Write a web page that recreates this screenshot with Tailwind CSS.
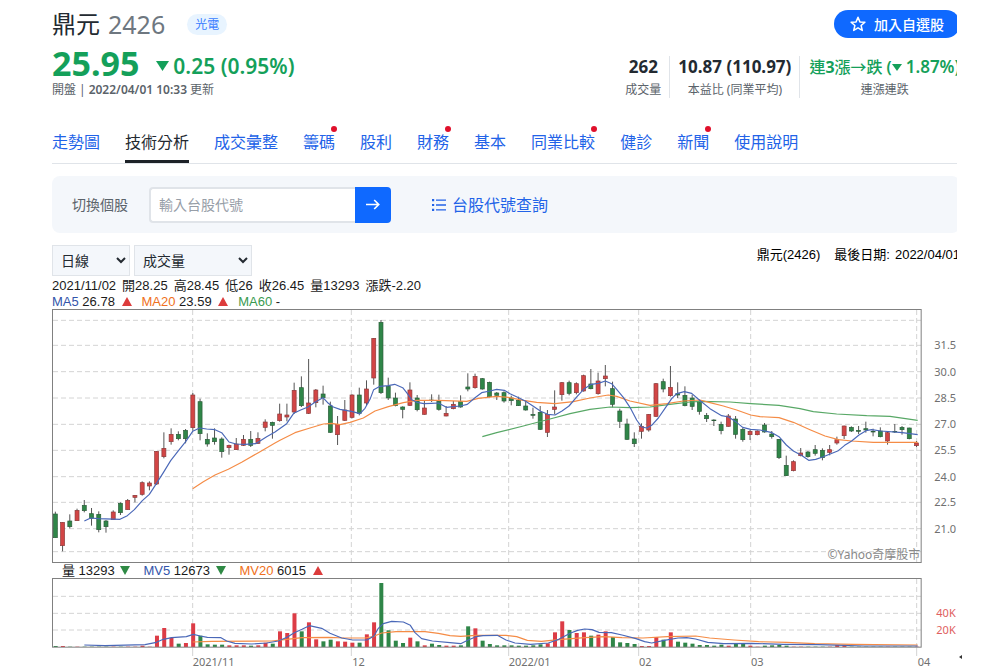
<!DOCTYPE html>
<html lang="zh-Hant">
<head>
<meta charset="utf-8">
<meta name="viewport" content="width=device-width, initial-scale=1">
<title>鼎元 2426 技術分析</title>
<script src="https://cdn.jsdelivr.net/npm/@tailwindcss/browser@4"></script>
</head>
<body class="bg-white font-['Noto_Sans','Noto_Sans_CJK_TC',sans-serif] text-[#232a31]">
<div class="relative">
<main class="ml-[52px] mr-[43px] overflow-hidden">
<div class="w-[calc(100%+3px)]">

  <header class="flex justify-between">
    <div class="pt-[6px]">
      <div class="flex h-9 items-center">
        <h1 class="text-[24px] leading-9">鼎元</h1>
        <span class="ml-2 text-[25px] leading-9 text-[#6e7780]">2426</span>
        <a href="#" class="ml-[22px] rounded-full bg-[#e8f4ff] px-2 text-[12px] leading-[21px] text-[#3a7dff]">光電</a>
      </div>
      <div class="mt-[3px] flex h-9 items-center text-[#14a05a]">
        <span class="text-[34px] font-bold leading-9">25.95</span>
        <svg class="ml-[17px] mt-[6px] h-[10px] w-[13px]" viewBox="0 0 13 10" fill="currentColor"><path d="M0 0h13L6.500 10z"/></svg>
        <span class="ml-1 mt-[6px] text-[21px] font-semibold leading-7">0.25 (0.95%)</span>
      </div>
      <p class="mt-px flex gap-[3px] text-[12px] leading-4 text-[#5b636a]"><span>開盤</span><span>|</span><span class="font-semibold">2022/04/01 10:33</span><span>更新</span></p>
    </div>
    <div class="flex flex-col items-end pt-[10px]">
      <button class="flex h-7 w-[126px] items-center justify-center gap-2 rounded-full bg-[#0f69ff] text-[14px] font-medium text-white">
        <svg class="size-4" viewBox="0 0 16 16" fill="none" stroke="currentColor" stroke-width="1.500" stroke-linejoin="round"><path d="M8 1.300l1.900 4.600 5 .4-3.800 3.200 1.200 4.900L8 11.800l-4.300 2.600 1.200-4.900L1.100 6.300l5-.4z"/></svg>
        加入自選股
      </button>
      <dl class="mt-[18px] flex h-[42px] text-center text-[17px] font-bold">
        <div class="flex flex-col-reverse justify-between border-r border-[#e0e4e9] pr-2">
          <dt class="text-[12px] font-normal leading-4 text-[#5b636a]">成交量</dt><dd class="leading-[22px]">262</dd>
        </div>
        <div class="flex flex-col-reverse justify-between border-r border-[#e0e4e9] px-2">
          <dt class="text-[12px] font-normal leading-4 text-[#5b636a]">本益比 (同業平均)</dt><dd class="leading-[22px]">10.87 (110.97)</dd>
        </div>
        <div class="flex flex-col-reverse justify-between pl-[9px]">
          <dt class="text-[12px] font-normal leading-4 text-[#5b636a]">連漲連跌</dt>
          <dd class="flex items-center whitespace-nowrap text-[16px] leading-[22px] text-[#14a05a]"><span class="font-medium">連<b>3</b>漲→跌</span><span class="ml-1 font-semibold">(</span><svg class="mr-1 h-[7px] w-[10px]" viewBox="0 0 10 7" fill="currentColor"><path d="M0 0h10L5 7z"/></svg><span class="text-[17px] font-semibold">1.87%)</span></dd>
        </div>
      </dl>
    </div>
  </header>

  <nav class="mt-6 flex h-[42px] gap-[25px] whitespace-nowrap border-b border-[#e0e4e9] text-[16px] leading-[41px] text-[#2263e8]">
    <a href="#">走勢圖</a>
    <a href="#" class="border-b-[3px] border-[#1d2228] text-[#232a31]" aria-current="page">技術分析</a>
    <a href="#">成交彙整</a>
    <a href="#" class="relative">籌碼<i class="absolute -right-[2px] top-1 size-[6px] rounded-full bg-[#e0102b]"></i></a>
    <a href="#">股利</a>
    <a href="#" class="relative">財務<i class="absolute -right-[2px] top-1 size-[6px] rounded-full bg-[#e0102b]"></i></a>
    <a href="#">基本</a>
    <a href="#" class="relative">同業比較<i class="absolute -right-[2px] top-1 size-[6px] rounded-full bg-[#e0102b]"></i></a>
    <a href="#">健診</a>
    <a href="#" class="relative">新聞<i class="absolute -right-[2px] top-1 size-[6px] rounded-full bg-[#e0102b]"></i></a>
    <a href="#">使用說明</a>
  </nav>

  <form class="mt-3 flex h-[57px] items-center rounded-lg bg-[#f4f7fb] pl-5">
    <label for="symbol" class="text-[14px] text-[#5b636a]">切換個股</label>
    <input id="symbol" type="text" placeholder="輸入台股代號" class="ml-[21px] h-9 w-[206px] rounded-l border-2 border-r-0 border-[#e0e4e9] bg-white px-2 text-[14px] placeholder:text-[#979ea8]">
    <button type="button" aria-label="查詢" class="flex h-9 w-9 items-center justify-center rounded-r bg-[#0f69ff] text-white">
      <svg class="h-[11px] w-[14px]" viewBox="0 0 14 11" fill="none" stroke="currentColor" stroke-width="1.700"><path d="M0 5.500h12.500M8.200 1l4.500 4.500L8.200 10"/></svg>
    </button>
    <a href="#" class="ml-[41px] flex items-center gap-[6px] text-[16px] text-[#2263e8]">
      <svg class="h-3 w-[14px]" viewBox="0 0 14 12" fill="currentColor"><path d="M0 0h2.200v2.200H0zM0 4.900h2.200v2.200H0zM0 9.800h2.200V12H0zM4 .4h10v1.400H4zM4 5.300h10v1.400H4zM4 10.200h10v1.400H4z"/></svg>
      台股代號查詢
    </a>
  </form>

  <div class="mt-3 flex items-start justify-between">
    <div class="flex gap-1 text-[14px]">
      <select aria-label="週期" class="h-[31px] w-[78px] border border-[#e0e4e9] bg-[#f4f7fb] pl-1"><option>日線</option></select>
      <select aria-label="指標" class="h-[31px] w-[118px] border border-[#e0e4e9] bg-[#f4f7fb] pl-1"><option>成交量</option></select>
    </div>
    <p class="flex gap-[14px] font-['Liberation_Sans','Noto_Sans_CJK_TC',sans-serif] text-[13px] leading-[19px] text-black"><span>鼎元(2426)</span><span class="flex gap-[5px]"><span>最後日期:</span><span>2022/04/01</span></span></p>
  </div>

  <section class="font-['Liberation_Sans','Noto_Sans_CJK_TC',sans-serif] text-[13px] text-[#1a1a1a]">
    <p class="mt-[2px] flex gap-[6px] leading-4"><span>2021/11/02</span><span>開28.25</span><span>高28.45</span><span>低26</span><span>收26.45</span><span>量13293</span><span>漲跌-2.20</span></p>
    <p class="flex h-[15px] gap-[10px] leading-[15px]">
      <span><span class="text-[#3355aa]">MA5</span> 26.78 <svg class="ml-[3px] inline h-[9px] w-[10px] align-baseline" viewBox="0 0 10 9" fill="#dc3c3c"><path d="M5 0l5 9H0z"/></svg></span>
      <span><span class="text-[#f07020]">MA20</span> 23.59 <svg class="ml-[3px] inline h-[9px] w-[10px] align-baseline" viewBox="0 0 10 9" fill="#dc3c3c"><path d="M5 0l5 9H0z"/></svg></span>
      <span><span class="text-[#3a9a50]">MA60</span> -</span>
    </p>

    <svg id="price" class="block w-full" viewBox="21 -3 2724 762" role="img" aria-label="日線圖">
      <g id="price-grid" stroke="#d4d4d4" stroke-width="3" stroke-dasharray="15 9"></g>
      <g id="candles"></g>
      <g fill="none" stroke-width="3.500" stroke-linejoin="round">
        <polyline stroke="#58a866" points="1312,380 1355,368 1435,348 1515,327 1575,311 1635,298 1695,291 1755,293 1815,291 1875,283 1935,276 1970,274 2055,276 2117,281 2202,286 2265,296 2305,305 2375,312 2465,317 2535,319 2618,331"/>
        <polyline stroke="#f58c46" points="443,536 475,515 510,495 550,478 590,457 640,428 690,399 705,391 750,368 795,354 835,342 860,340 885,344 915,337 955,324 990,303 1030,290 1075,278 1115,271 1180,271 1265,274 1300,265 1355,259 1390,262 1435,271 1475,277 1530,281 1585,275 1635,264 1690,255 1715,259 1755,273 1815,286 1865,281 1915,273 1965,270 1995,278 2035,288 2075,300 2117,315 2145,320 2202,323 2245,337 2295,359 2340,378 2380,389 2420,393 2485,397 2618,397"/>
        <polyline stroke="#4a68b8" points="118,633 137,624 160,626 225,628 247,617 268,599 292,572 313,553 334,521 355,488 377,452 398,425 422,395 443,364 464,354 485,357 510,359 530,368 552,396 573,402 600,403 632,401 645,393 665,380 690,366 725,341 746,310 767,300 789,291 812,275 834,263 850,280 865,291 885,298 919,304 945,311 960,295 975,268 986,239 1005,229 1030,227 1049,223 1073,233 1085,248 1100,269 1116,277 1137,281 1159,280 1180,279 1204,292 1225,290 1246,288 1267,283 1289,264 1310,248 1335,243 1355,238 1378,241 1395,251 1421,263 1442,274 1465,289 1487,304 1508,313 1530,315 1551,303 1572,288 1596,260 1618,236 1639,223 1660,220 1681,213 1700,221 1715,238 1735,262 1755,292 1775,330 1790,351 1805,354 1820,346 1840,324 1860,295 1880,266 1895,251 1918,245 1940,250 1963,270 1995,296 2030,317 2051,321 2072,335 2093,352 2117,358 2145,360 2181,368 2202,380 2224,405 2245,423 2269,436 2291,451 2312,448 2333,441 2380,422 2399,406 2420,393 2442,375 2463,362 2480,359 2508,363 2572,368 2618,374"/>
      </g>
      <text x="2626" y="746" text-anchor="end" class="font-['Noto_Sans','Noto_Sans_CJK_TC',sans-serif] text-[36px]" fill="#888">©Yahoo奇摩股市</text>
      <rect x="22.500" y="-1.500" width="2606" height="759" fill="none" stroke="#808080" stroke-width="3"/>
      <g class="font-['Noto_Sans',sans-serif] text-[33px]" fill="#707070">
        <text x="2668" y="118">31.5</text><text x="2668" y="197">30.0</text><text x="2668" y="276">28.5</text><text x="2668" y="355">27.0</text><text x="2668" y="433">25.5</text><text x="2668" y="512">24.0</text><text x="2668" y="589">22.5</text><text x="2668" y="668">21.0</text>
      </g>
    </svg>

    <p class="flex h-[15px] gap-[13px] pl-[10px] leading-[15px]">
      <span>量 13293 <svg class="ml-[2px] inline h-[9px] w-[10px] align-baseline" viewBox="0 0 10 9" fill="#2f8a45"><path d="M0 0h10L5 9z"/></svg></span>
      <span><span class="text-[#3355aa]">MV5</span> 12673 <svg class="ml-[3px] inline h-[9px] w-[10px] align-baseline" viewBox="0 0 10 9" fill="#2f8a45"><path d="M0 0h10L5 9z"/></svg></span>
      <span><span class="text-[#f07020]">MV20</span> 6015 <svg class="ml-[3px] inline h-[9px] w-[10px] align-baseline" viewBox="0 0 10 9" fill="#dc3c3c"><path d="M5 0l5 9H0z"/></svg></span>
    </p>

    <svg id="volume" class="block w-full" viewBox="21 54 2724 267" role="img" aria-label="成交量圖">
      <g id="volume-grid" stroke="#d4d4d4" stroke-width="3" stroke-dasharray="15 9"></g>
      <g id="bars"></g>
      <g fill="none" stroke-width="3.500" stroke-linejoin="round">
        <polyline stroke="#f58c46" points="443,246 500,244 680,243 726,238 771,233 850,232 900,234 960,234 987,229 1010,219 1053,215 1140,215 1180,220 1215,227 1247,229 1293,226 1383,226 1415,230 1447,241 1489,244 1541,239 1619,233 1678,230 1731,233 1794,234 1867,230 1952,228 1994,234 2067,240 2141,245 2225,247 2309,251 2425,253 2618,255"/>
        <polyline stroke="#4a68b8" points="118,255 180,257 300,254 334,247 355,238 380,233 424,230 445,223 466,228 487,232 528,233 545,243 570,250 620,252 665,249 700,243 726,232 748,218 771,208 793,197 830,205 855,220 890,234 923,240 966,240 987,228 1000,205 1015,191 1040,184 1075,186 1096,196 1110,218 1130,236 1162,243 1215,248 1247,251 1268,241 1293,230 1314,227 1357,226 1383,240 1410,249 1457,253 1510,249 1541,238 1577,219 1598,211 1619,207 1641,209 1662,217 1699,218 1731,225 1773,236 1799,245 1820,249 1858,241 1899,234 1925,233 1952,237 1988,247 2036,251 2120,250 2215,253 2320,254 2457,258 2618,258"/>
      </g>
      <rect x="22.500" y="55.500" width="2606" height="206" fill="none" stroke="#808080" stroke-width="3"/>
      <g class="font-['Noto_Sans',sans-serif] text-[33px]" fill="#707070">
        <text x="443" y="317">2021/11</text><text x="922" y="317">12</text><text x="1391" y="317">2022/01</text><text x="1782" y="317">02</text><text x="2118" y="317">03</text><text x="2618" y="317">04</text>
      </g>
      <g class="font-['Noto_Sans',sans-serif] text-[33px]" fill="#e06060"><text x="2674" y="172">40K</text><text x="2674" y="221">20K</text></g>
    </svg>
  </section>
</div>
</main>
<svg class="absolute bottom-2 right-[38px] h-1 w-[3px]" viewBox="0 0 3 4" fill="#333"><path d="M3 0v4L0 2z"/></svg>
</div>

<script>
// Chart units are thirds of a CSS pixel at full width.
const x = i => 31 + 21.71 * i;
// Per trading day: high, body top, body bottom, low, colour (r = up, g = down).
const days = `605,612,683,683,g 637,637,707,724,r 613,633,650,655,g 596,601,632,632,r 570,586,602,607,g 594,611,625,647,g 604,613,659,667,g 630,633,650,668,g 601,606,629,629,r 577,580,608,615,g
567,571,599,599,r 555,556,562,577,r 514,518,553,557,r 514,519,528,541,r 423,424,522,525,r 367,415,440,445,r 355,373,395,404,r 364,373,386,391,g 357,361,386,400,g 249,255,353,362,r
266,275,371,391,g 370,388,402,410,g 355,384,395,404,g 382,387,425,443,g 404,406,413,434,r 384,402,419,419,r 375,388,406,408,r 363,388,406,411,g 367,385,400,402,r 328,336,352,364,r
335,337,346,386,g 281,312,332,335,r 281,315,321,334,r 218,241,306,312,r 199,233,287,291,g 147,279,310,312,r 237,240,278,292,r 227,252,263,284,g 275,288,367,369,g 318,343,374,405,r
270,300,331,333,r 253,255,322,325,r 233,255,310,316,g 211,237,279,288,r 84,85,204,224,r 30,37,248,252,g 203,229,264,270,g 248,264,287,289,g 289,291,298,325,g 217,240,286,288,r
255,264,299,304,g 272,294,313,314,r 253,270,272,276,g 254,274,298,302,g 288,310,318,319,r 273,283,296,298,r 256,275,291,293,g 190,231,237,244,g 191,199,233,236,r 204,206,237,239,g
215,217,260,262,g 246,249,256,270,g 244,248,273,278,g 257,264,272,286,g 260,271,287,288,g 270,288,300,302,g 293,313,316,326,g 288,307,358,360,g 300,313,367,381,r 241,291,298,313,r
216,218,254,272,r 212,218,250,256,g 217,221,248,253,r 194,197,243,245,r 177,222,236,238,g 188,213,251,254,r 165,198,206,229,r 215,236,283,292,g 296,303,334,354,g 326,342,388,390,g
367,387,401,411,g 340,349,364,386,r 312,313,360,365,r 219,221,319,321,r 206,215,237,247,g 168,232,257,260,r 217,251,255,264,g 229,256,287,289,g 254,264,289,300,g 268,277,304,314,g
309,316,326,336,g 328,330,332,348,g 335,343,362,373,g 312,318,349,350,r 318,327,373,386,g 354,358,389,395,g 360,364,374,390,r 361,363,374,376,r 339,345,366,368,g 363,372,380,386,g
387,388,443,447,g 437,466,497,498,g 451,455,482,484,r 414,429,437,439,r 423,426,440,443,g 405,419,430,437,g 415,421,443,451,g 405,419,427,436,r 380,389,399,404,r 347,348,377,387,r
349,352,363,366,g 348,361,364,372,g 335,356,360,368,g 356,364,366,379,g 352,363,380,382,g 366,368,393,404,r 342,364,366,369,g 348,352,359,374,g 353,354,386,388,g 393,399,407,411,r`
  .split(/\s+/).map(d => d.split(','));
// Top edge of each day's volume bar.
const tops = [258,258,260,260,260,260,260,260,260,260,260,260,257,260,227,204,233,251,249,190,
227,253,254,254,256,256,256,257,256,248,251,214,219,160,214,187,238,244,239,244,
245,248,248,223,187,69,211,242,249,233,244,256,251,255,257,257,256,199,205,242,
252,256,256,256,257,257,256,253,250,217,184,210,219,217,227,224,214,231,247,249,
252,258,258,231,239,217,245,248,251,255,255,257,254,257,251,251,257,260,257,256,
255,257,260,260,260,260,260,260,255,255,260,260,260,260,260,260,260,260,260,260];
const months = [443, 919, 1391, 1781, 2117, 2615];
const line = (x1, y1, x2, y2, extra = '') => `<line x1="${x1}" y1="${y1}" x2="${x2}" y2="${y2}" ${extra}/>`;
document.getElementById('price-grid').innerHTML =
  [31,106,185,264,343,421,500,577,656,725].map(y => line(24, y, 2628, y)).join('') + months.map(m => line(m, 0, m, 756)).join('');
document.getElementById('volume-grid').innerHTML =
  [109,160,210].map(y => line(24, y, 2628, y)).join('') + months.map(m => line(m, 57, m, 261) + line(m, 262, m, 288, 'stroke-dasharray="none"')).join('');
document.getElementById('candles').innerHTML = days.map(([h, t, b, l, c], i) => {
  const cx = x(i);
  return line(cx, h, cx, l, 'stroke="#555" stroke-width="3"') +
    `<rect x="${cx - 6}" y="${t}" width="12" height="${Math.max(1, b - t)}" fill="${c === 'r' ? '#d24545' : '#2f8648'}" stroke="${c === 'r' ? '#8a3a3a' : '#2c5c3a'}" stroke-width="2"/>`;
}).join('');
document.getElementById('bars').innerHTML = tops.map((t, i) =>
  `<rect x="${x(i) - 5}" y="${t}" width="12" height="${261 - t}" fill="${days[i][4] === 'r' || i === 18 ? '#dc3c46' : '#2f8648'}"/>`).join('');
</script>
</body>
</html>
